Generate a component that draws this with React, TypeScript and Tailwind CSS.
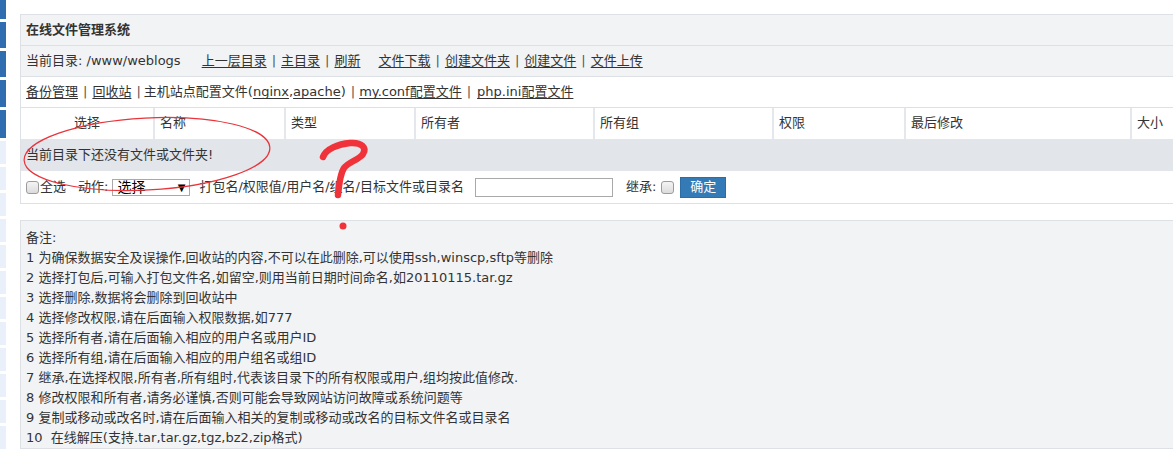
import React from "react";

const font = { fontFamily: '"DejaVu Sans", "Noto Sans CJK SC", sans-serif' };

function Sep() {
  return <span className="mx-[5px] text-[#555]">|</span>;
}
function L({ children }: { children: React.ReactNode }) {
  return <span className="underline underline-offset-2 decoration-[#333]">{children}</span>;
}
function Check() {
  return (
    <span className="inline-block w-[13px] h-[13px] rounded-[3px] border border-[#9c9c9c] bg-gradient-to-b from-[#f4f4f4] to-[#dcdcdc]" />
  );
}

const notes = [
  "1 为确保数据安全及误操作,回收站的内容,不可以在此删除,可以使用ssh,winscp,sftp等删除",
  "2 选择打包后,可输入打包文件名,如留空,则用当前日期时间命名,如20110115.tar.gz",
  "3 选择删除,数据将会删除到回收站中",
  "4 选择修改权限,请在后面输入权限数据,如777",
  "5 选择所有者,请在后面输入相应的用户名或用户ID",
  "6 选择所有组,请在后面输入相应的用户组名或组ID",
  "7 继承,在选择权限,所有者,所有组时,代表该目录下的所有权限或用户,组均按此值修改.",
  "8 修改权限和所有者,请务必谨慎,否则可能会导致网站访问故障或系统问题等",
  "9 复制或移动或改名时,请在后面输入相关的复制或移动或改名的目标文件名或目录名",
  "10  在线解压(支持.tar,tar.gz,tgz,bz2,zip格式)",
];

const cols = ["名称", "类型", "所有者", "所有组", "权限", "最后修改", "大小"];

export default function App() {
  const blue = [20, 27, 27, 29, 29];
  const light = Array.from({ length: 12 }, () => 24);
  return (
    <div
      className="relative w-[1173px] h-[449px] overflow-hidden bg-white text-[13px] text-[#333] flex"
      style={font}
    >
      {/* sidebar strip */}
      <div className="w-[6px] flex flex-col gap-[3px] shrink-0">
        {blue.map((h, i) => (
          <div key={"b" + i} className="bg-[#2f6db0]" style={{ height: h }} />
        ))}
        {light.map((h, i) => (
          <div key={"l" + i} className="bg-[#e9f0f9]" style={{ height: h }} />
        ))}
      </div>

      <div className="pl-[14px] pt-[14px] flex flex-col shrink-0">
        {/* main panel */}
        <div className="w-[1170px] border border-[#dde1e6] bg-[#f2f3f5]">
          <div className="h-[31px] flex items-center px-[5px] font-bold border-b border-[#dde1e6]">
            在线文件管理系统
          </div>
          <div className="h-[31px] flex items-center px-[5px] border-b border-[#dde1e6]">
            <span>当前目录: /www/weblogs</span>
            <span className="ml-[21px]">
              <L>上一层目录</L>
              <Sep />
              <L>主目录</L>
              <Sep />
              <L>刷新</L>
            </span>
            <span className="ml-[18px]">
              <L>文件下载</L>
              <Sep />
              <L>创建文件夹</L>
              <Sep />
              <L>创建文件</L>
              <Sep />
              <L>文件上传</L>
            </span>
          </div>
          <div className="h-[31px] flex items-center px-[5px] bg-white border-b border-[#dde1e6]">
            <L>备份管理</L>
            <Sep />
            <L>回收站</L>
            <span className="ml-[5px] mr-[3px] text-[#555]">|</span>
            <span>
              主机站点配置文件(<L>nginx</L>,<L>apache</L>)
            </span>
            <span className="ml-[5px] mr-[4px] text-[#555]">|</span>
            <L>my.conf配置文件</L>
            <span className="ml-[5px] mr-[6px] text-[#555]">|</span>
            <L>php.ini配置文件</L>
          </div>
          <div className="h-[31px] grid grid-cols-[132px_131px_130px_179px_179px_132px_226px_1fr] bg-white">
            <div className="flex items-center justify-center pb-[2px]">选择</div>
            {cols.map((c) => (
              <div key={c} className="flex items-center pl-[5px] pb-[2px] border-l-2 border-[#e4e7eb]">
                {c}
              </div>
            ))}
          </div>
          <div className="h-[32px] flex items-center px-[5px] bg-[#e2e5e9]">
            当前目录下还没有文件或文件夹!
          </div>
          <div className="h-[32px] flex items-center px-[5px] bg-white">
            <Check />
            <span className="ml-[1px]">全选</span>
            <span className="ml-[12px]">动作:</span>
            <div className="ml-[4px] w-[78px] h-[17px] border border-[#a9a9a9] bg-white flex items-center justify-between pl-[4px] pr-[4px] text-[14px] text-black">
              <span>选择</span>
              <span className="text-[10px]">▼</span>
            </div>
            <span className="ml-[9px]">打包名/权限值/用户名/组名/目标文件或目录名</span>
            <div className="ml-[11px] w-[138px] h-[19px] border border-[#a9a9a9] bg-white" />
            <span className="ml-[13px]">继承:</span>
            <span className="ml-[5px] flex"><Check /></span>
            <div className="ml-[6px] w-[46px] h-[21px] bg-[#337ab7] border border-[#2e6da4] text-white flex items-center justify-center">
              确定
            </div>
          </div>
        </div>

        {/* notes panel */}
        <div className="mt-[16px] w-[1170px] h-[240px] border border-[#dde1e6] bg-[#f2f3f5] pt-[7px] px-[5px] leading-[20px]">
          <div>备注:</div>
          {notes.map((n) => (
            <div key={n} className="whitespace-pre">{n}</div>
          ))}
        </div>
      </div>

      {/* hand-drawn annotations */}
      <svg className="absolute left-0 top-0 pointer-events-none" width={1173} height={449}>
        <ellipse cx={147} cy={154} rx={123} ry={36} fill="none" stroke="#e8343a" strokeWidth={1.2} transform="rotate(-3 147 154)" />
        <path
          d="M323 157 C326 149 338 144 350 143 C362 142 367 148 363 154 C359 160 348 162 344 168 C340 174 339 184 338 195"
          fill="none"
          stroke="#f0333a"
          strokeWidth={6.5}
          strokeLinecap="round"
          strokeLinejoin="round"
        />
        <circle cx={343} cy={226} r={3.5} fill="#f0333a" />
      </svg>
    </div>
  );
}
